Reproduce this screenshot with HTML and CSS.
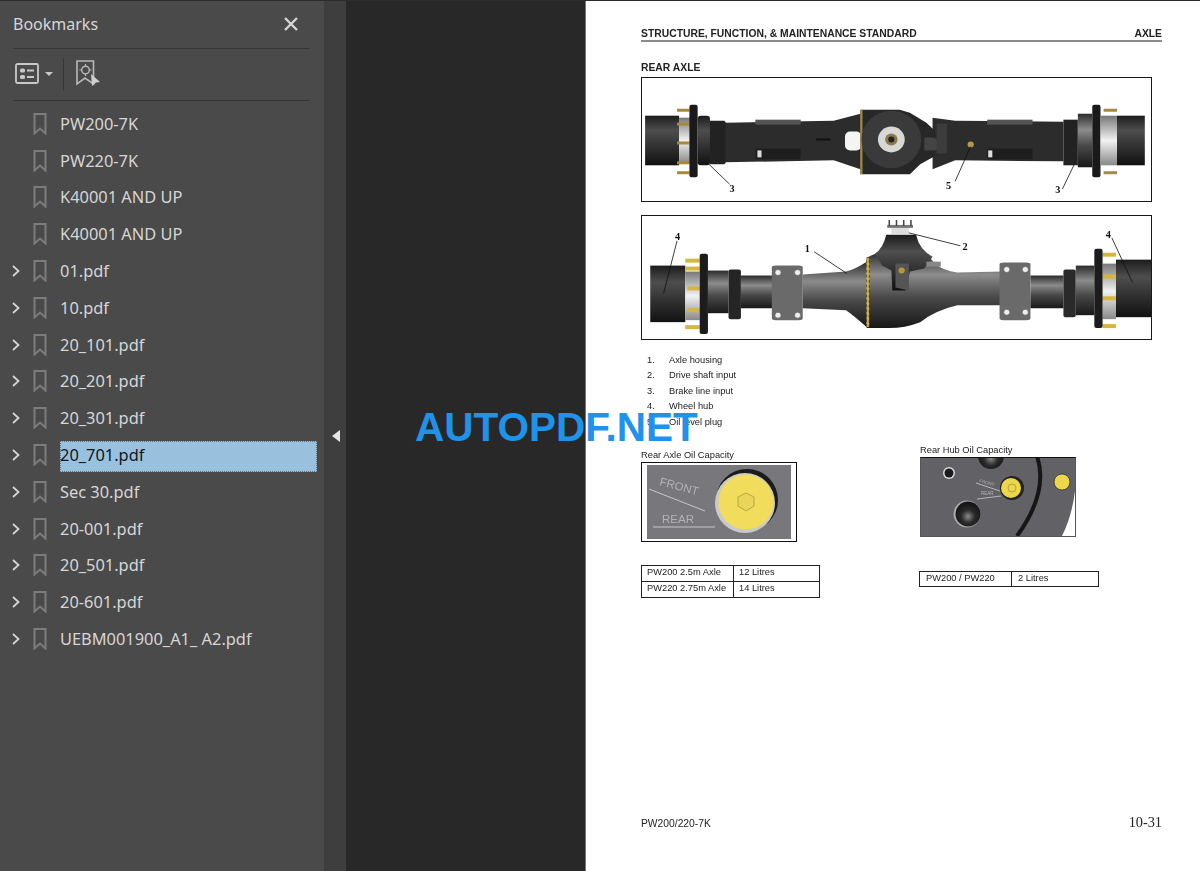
FILE: index.html
```html
<!DOCTYPE html>
<html lang="en">
<head>
    <meta charset="UTF-8">
    <meta name="viewport" content="width=device-width, initial-scale=1.0">
    <title>PW200/220-7K - Bookmarks</title>
    <link rel="stylesheet" href="styles.css">
</head>
<body>
    <svg class="defs" width="0" height="0">
        <defs>
            <symbol id="bm" viewBox="0 0 14 22">
                <path d="M1.5 1h11v19.5L7 15.5l-5.500 5z" fill="none" stroke="currentColor" stroke-width="2"/>
            </symbol>
            <symbol id="chev" viewBox="0 0 8 12">
                <path d="M1 1l5.500 5L1 11" fill="none" stroke="currentColor" stroke-width="1.800"/>
            </symbol>
            <linearGradient id="metal" x1="0" y1="0" x2="0" y2="1">
                <stop offset="0" stop-color="#1c1c1c"/>
                <stop offset=".3" stop-color="#4e4e4e"/>
                <stop offset=".6" stop-color="#333"/>
                <stop offset="1" stop-color="#111"/>
            </linearGradient>
            <linearGradient id="steel" x1="0" y1="0" x2="0" y2="1">
                <stop offset="0" stop-color="#2b2b2b"/>
                <stop offset=".3" stop-color="#8c8c8c"/>
                <stop offset=".6" stop-color="#484848"/>
                <stop offset="1" stop-color="#181818"/>
            </linearGradient>
            <linearGradient id="silver" x1="0" y1="0" x2="0" y2="1">
                <stop offset="0" stop-color="#777"/>
                <stop offset=".5" stop-color="#f2f2f2"/>
                <stop offset="1" stop-color="#888"/>
            </linearGradient>
            <radialGradient id="ball" cx=".5" cy=".6" r=".6">
                <stop offset="0" stop-color="#8a8a8a"/>
                <stop offset=".45" stop-color="#2a2a2a"/>
                <stop offset="1" stop-color="#111"/>
            </radialGradient>
        </defs>
    </svg>

    <div class="viewer">
        <aside class="sidebar">
            <header class="side-head">
                <h1>Bookmarks</h1>
                <svg class="close" width="16" height="16" viewBox="0 0 16 16">
                    <path d="M2 2l12 12M14 2L2 14" stroke="#d4d4d4" stroke-width="2.400" fill="none"/>
                </svg>
            </header>
            <div class="side-tools">
                <svg class="tool-list" width="24" height="21" viewBox="0 0 24 21">
                    <rect x="1" y="1" width="22" height="19" rx="1.500" fill="none" stroke="#c8c8c8" stroke-width="1.800"/>
                    <rect x="5" y="5.500" width="5" height="4" rx="1.500" fill="#c8c8c8"/>
                    <rect x="5" y="12" width="5" height="4" rx="1.500" fill="#c8c8c8"/>
                    <path d="M12 7.500h7M12 14h7" stroke="#c8c8c8" stroke-width="1.800"/>
                </svg>
                <span class="caret"></span>
                <span class="tool-sep"></span>
                <svg width="25" height="27" viewBox="0 0 25 27">
                    <path d="M1 1h16.500v23L9 18l-8 6z" fill="none" stroke="#b8b8b8" stroke-width="1.600"/>
                    <circle cx="9.500" cy="10" r="3.800" fill="none" stroke="#b8b8b8" stroke-width="1.400"/>
                    <path d="M9.500 4v2M9.500 14v2M3.500 10h2M13.500 10h2" stroke="#b8b8b8" stroke-width="1.200"/>
                    <path d="M15 14l9 8-4 .5-4 3.500z" fill="#d0d0d0"/>
                </svg>
            </div>
            <ul class="tree">
                <li><span class="twist"></span><svg class="mark"><use href="#bm"/></svg><span class="label">PW200-7K</span></li>
                <li><span class="twist"></span><svg class="mark"><use href="#bm"/></svg><span class="label">PW220-7K</span></li>
                <li><span class="twist"></span><svg class="mark"><use href="#bm"/></svg><span class="label">K40001 AND UP</span></li>
                <li><span class="twist"></span><svg class="mark"><use href="#bm"/></svg><span class="label">K40001 AND UP</span></li>
                <li><svg class="twist"><use href="#chev"/></svg><svg class="mark"><use href="#bm"/></svg><span class="label">01.pdf</span></li>
                <li><svg class="twist"><use href="#chev"/></svg><svg class="mark"><use href="#bm"/></svg><span class="label">10.pdf</span></li>
                <li><svg class="twist"><use href="#chev"/></svg><svg class="mark"><use href="#bm"/></svg><span class="label">20_101.pdf</span></li>
                <li><svg class="twist"><use href="#chev"/></svg><svg class="mark"><use href="#bm"/></svg><span class="label">20_201.pdf</span></li>
                <li><svg class="twist"><use href="#chev"/></svg><svg class="mark"><use href="#bm"/></svg><span class="label">20_301.pdf</span></li>
                <li class="selected"><svg class="twist"><use href="#chev"/></svg><svg class="mark"><use href="#bm"/></svg><span class="label">20_701.pdf</span></li>
                <li><svg class="twist"><use href="#chev"/></svg><svg class="mark"><use href="#bm"/></svg><span class="label">Sec 30.pdf</span></li>
                <li><svg class="twist"><use href="#chev"/></svg><svg class="mark"><use href="#bm"/></svg><span class="label">20-001.pdf</span></li>
                <li><svg class="twist"><use href="#chev"/></svg><svg class="mark"><use href="#bm"/></svg><span class="label">20_501.pdf</span></li>
                <li><svg class="twist"><use href="#chev"/></svg><svg class="mark"><use href="#bm"/></svg><span class="label">20-601.pdf</span></li>
                <li><svg class="twist"><use href="#chev"/></svg><svg class="mark"><use href="#bm"/></svg><span class="label">UEBM001900_A1_ A2.pdf</span></li>
            </ul>
        </aside>

        <div class="collapse-strip"><span class="collapse-arrow"></span></div>

        <main class="canvas">
            <article class="page">
                <div class="page-head">
                    <span>STRUCTURE, FUNCTION, &amp; MAINTENANCE STANDARD</span>
                    <span>AXLE</span>
                </div>
                <h2>REAR AXLE</h2>

                <figure class="axle-fig fig-top">
                    <svg viewBox="0 0 494 124" preserveAspectRatio="none">
                        <rect x="3" y="38" width="33" height="50" fill="url(#metal)"/>
                        <rect x="36" y="40" width="11" height="46" fill="url(#silver)"/>
                        <g fill="#a58a3a">
                            <rect x="34" y="31" width="12" height="3"/>
                            <rect x="34" y="45" width="12" height="3"/>
                            <rect x="34" y="64" width="12" height="3"/>
                            <rect x="34" y="84" width="12" height="3"/>
                            <rect x="34" y="94" width="12" height="3"/>
                            <rect x="448" y="31" width="13" height="3"/>
                            <rect x="448" y="45" width="13" height="3"/>
                            <rect x="448" y="64" width="13" height="3"/>
                            <rect x="448" y="84" width="13" height="3"/>
                            <rect x="448" y="94" width="13" height="3"/>
                        </g>
                        <rect x="46" y="27" width="8" height="73" rx="2" fill="#1a1a1a"/>
                        <rect x="54" y="38" width="12" height="50" rx="3" fill="url(#metal)"/>
                        <path d="M66 43h14q5 6 5 12v18q0 8-5 14H66z" fill="#222"/>
                        <path d="M81 45l105-2 26-7v56l-26-9-105 2z" fill="#2c2c2c"/>
                        <path d="M282 40l22 3 105 1v40l-105-1-22 9z" fill="#2c2c2c"/>
                        <rect x="110" y="42" width="44" height="5" fill="#555"/>
                        <rect x="110" y="71" width="44" height="11" rx="1" fill="#1e1e1e"/>
                        <rect x="112" y="73" width="4" height="7" fill="#ddd"/>
                        <rect x="335" y="42" width="44" height="5" fill="#555"/>
                        <rect x="335" y="71" width="44" height="11" rx="1" fill="#1e1e1e"/>
                        <rect x="336" y="73" width="4" height="7" fill="#ddd"/>
                        <rect x="197" y="54" width="16" height="19" rx="5" fill="#f4f4f4"/>
                        <rect x="169" y="61" width="14" height="2" fill="#111"/>
                        <path d="M212 32h38l10 3 16 10 8 8v26l-14 8-10 10h-48z" fill="#272727"/>
                        <rect x="212" y="32" width="2" height="65" fill="#a58a3a"/>
                        <circle cx="242" cy="62" r="29" fill="#3a3a3a"/>
                        <circle cx="242" cy="62" r="13" fill="#d8d8d4"/>
                        <circle cx="242" cy="62" r="6" fill="#8a7a4c"/>
                        <circle cx="242" cy="62" r="3" fill="#222"/>
                        <path d="M274 60h8q8 3 8 8t-8 5h-8z" fill="#444"/>
                        <rect x="286" y="46" width="10" height="30" fill="#3c3c3c"/>
                        <circle cx="319" cy="67" r="3" fill="#b89a48"/>
                        <rect x="409" y="42" width="14" height="46" fill="#222"/>
                        <rect x="423" y="36" width="14" height="54" fill="url(#steel)"/>
                        <rect x="437" y="27" width="8" height="73" rx="2" fill="#1a1a1a"/>
                        <rect x="445" y="38" width="16" height="50" fill="url(#silver)"/>
                        <rect x="461" y="38" width="27" height="50" fill="url(#metal)"/>
                        <g fill="none" stroke="#111" stroke-width=".8">
                            <path d="M85 107L64 86"/>
                            <path d="M304 104l15-35"/>
                            <path d="M408 112l12-26"/>
                        </g>
                        <text x="85" y="115">3</text>
                        <text x="295" y="112">5</text>
                        <text x="401" y="116">3</text>
                    </svg>
                </figure>

                <figure class="axle-fig fig-side">
                    <svg viewBox="0 0 494 124" preserveAspectRatio="none">
                        <rect x="8" y="50" width="34" height="57" fill="url(#metal)"/>
                        <rect x="42" y="56" width="14" height="49" fill="url(#silver)"/>
                        <g fill="#d6b63c">
                            <rect x="42" y="43" width="14" height="4"/>
                            <rect x="42" y="51" width="14" height="4"/>
                            <rect x="44" y="71" width="12" height="4"/>
                            <rect x="44" y="93" width="12" height="4"/>
                            <rect x="42" y="110" width="14" height="4"/>
                        </g>
                        <rect x="56" y="38" width="8" height="81" rx="2" fill="#1c1c1c"/>
                        <rect x="64" y="55" width="20" height="43" fill="url(#steel)"/>
                        <rect x="84" y="54" width="12" height="50" rx="2" fill="#252525"/>
                        <rect x="96" y="60" width="34" height="33" fill="url(#steel)"/>
                        <path d="M156 59l42-3q10-3 20-10v66q-13-12-20-17l-42-2z" fill="url(#steel)"/>
                        <path d="M126 52q0-2 4-2h22q4 0 4 2v51q0 2-4 2h-22q-4 0-4-2z" fill="#6a6a6a"/>
                        <path d="M218 42q10-6 22-6h26q12 2 18 12 8 7 22 9l44-1v34h-44q-21 5-36 17-15 6-30 6h-22z" fill="url(#steel)"/>
                        <rect x="218" y="42" width="2.500" height="70" fill="#d6b63c" stroke="#111" stroke-width=".5" stroke-dasharray="3 2"/>
                        <path d="M226 38q8-5 11-19h29q3 15 16 22l-8 12-14 3-4 19h-13l-1-20-9-5z" fill="url(#metal)"/>
                        <rect x="242" y="12" width="17" height="6" fill="#ddd"/>
                        <rect x="238" y="9" width="25" height="3" fill="#777"/>
                        <path d="M240 4v6M247 4v6M254 4v6M261 4v6" stroke="#444" stroke-width="1.500"/>
                        <path d="M246 48h13v27l-13-3z" fill="#555"/>
                        <circle cx="252" cy="55" r="3" fill="#b8982e"/>
                        <rect x="276" y="46" width="14" height="5" fill="#888"/>
                        <path d="M347 49q0-2 4-2h22q4 0 4 2v54q0 2-4 2h-22q-4 0-4-2z" fill="#6a6a6a"/>
                        <rect x="377" y="60" width="32" height="33" fill="url(#steel)"/>
                        <rect x="409" y="54" width="12" height="48" rx="2" fill="#2a2a2a"/>
                        <rect x="421" y="50" width="18" height="50" fill="url(#steel)"/>
                        <rect x="447" y="48" width="13" height="56" fill="url(#silver)"/>
                        <rect x="460" y="44" width="34" height="58" fill="url(#metal)"/>
                        <g fill="#d6b63c">
                            <rect x="447" y="37" width="13" height="4"/>
                            <rect x="447" y="59" width="13" height="4"/>
                            <rect x="447" y="81" width="13" height="4"/>
                            <rect x="447" y="109" width="13" height="4"/>
                        </g>
                        <rect x="439" y="33" width="8" height="80" rx="2" fill="#1c1c1c"/>
                        <g fill="#eee" stroke="#555" stroke-width=".6">
                            <circle cx="132" cy="57" r="3"/>
                            <circle cx="151" cy="57" r="3"/>
                            <circle cx="132" cy="100" r="3"/>
                            <circle cx="151" cy="100" r="3"/>
                            <circle cx="354" cy="54" r="3"/>
                            <circle cx="372" cy="54" r="3"/>
                            <circle cx="354" cy="97" r="3"/>
                            <circle cx="372" cy="97" r="3"/>
                        </g>
                        <g fill="none" stroke="#111" stroke-width=".8">
                            <path d="M34 25L21 78"/>
                            <path d="M167 36l32 22"/>
                            <path d="M309 30l-50-13"/>
                            <path d="M456 22l20 45"/>
                        </g>
                        <text x="32" y="24">4</text>
                        <text x="158" y="36">1</text>
                        <text x="311" y="34">2</text>
                        <text x="450" y="22">4</text>
                    </svg>
                </figure>

                <ol class="parts">
                    <li><span>1.</span>Axle housing</li>
                    <li><span>2.</span>Drive shaft input</li>
                    <li><span>3.</span>Brake line input</li>
                    <li><span>4.</span>Wheel hub</li>
                    <li><span>5.</span>Oil level plug</li>
                </ol>

                <div class="capacity">
                    <section class="cap-col cap-axle">
                        <p>Rear Axle Oil Capacity</p>
                        <div class="photo">
                            <svg width="154" height="78" viewBox="0 0 154 78">
                                <rect x="5" y="2" width="144" height="74" fill="#77777c"/>
                                <circle cx="105" cy="37" r="31" fill="#1b1b1b"/>
                                <circle cx="103" cy="40" r="30" fill="#c9c9c9"/>
                                <circle cx="104" cy="39" r="27.500" fill="#f1dc5c"/>
                                <path d="M104 30l8 4v9l-8 5-8-5v-9z" fill="#ead558" stroke="#a89a48" stroke-width=".8"/>
                                <path d="M7 26l56 22M11 64h62" stroke="#c8c8c8" stroke-width="1"/>
                                <text class="stamp" transform="translate(17 22) rotate(15)">FRONT</text>
                                <text class="stamp" x="20" y="60">REAR</text>
                            </svg>
                        </div>
                        <table class="cap-table">
                            <tr><td>PW200 2.5m Axle</td><td>12 Litres</td></tr>
                            <tr><td>PW220 2.75m Axle</td><td>14 Litres</td></tr>
                        </table>
                    </section>
                    <section class="cap-col cap-hub">
                        <p>Rear Hub Oil Capacity</p>
                        <div class="photo">
                            <svg width="154" height="78" viewBox="0 0 154 78">
                                <rect width="154" height="78" fill="#626266"/>
                                <path d="M154 33q-3 25-13 45h13z" fill="#fff"/>
                                <path d="M116 -2q12 36-20 80" fill="none" stroke="#161616" stroke-width="4"/>
                                <circle cx="70" cy="-2" r="13" fill="url(#ball)"/>
                                <circle cx="28" cy="15" r="6" fill="#ddd"/>
                                <circle cx="28" cy="15" r="4.500" fill="#1a1a1a"/>
                                <circle cx="46" cy="56" r="13.500" fill="#aaa"/>
                                <circle cx="47" cy="56" r="12.500" fill="url(#ball)"/>
                                <circle cx="91" cy="30" r="12" fill="#222"/>
                                <circle cx="90" cy="30" r="10" fill="#ecd64a"/>
                                <circle cx="91" cy="30" r="4" fill="none" stroke="#a39545" stroke-width=".8"/>
                                <circle cx="141" cy="24" r="8" fill="#ecd64a" stroke="#333" stroke-width=".8"/>
                                <path d="M55 25l24 8M56 41l24-3" stroke="#ccc" stroke-width=".8"/>
                                <text class="stamp stamp-sm" transform="translate(58 24) rotate(16)">FRONT</text>
                                <text class="stamp stamp-sm" x="60" y="37">REAR</text>
                            </svg>
                        </div>
                        <table class="cap-table">
                            <tr><td>PW200 / PW220</td><td>2 Litres</td></tr>
                        </table>
                    </section>
                </div>

                <footer class="page-foot">
                    <span>PW200/220-7K</span>
                    <span class="page-no">10-31</span>
                </footer>
            </article>
        </main>
    </div>

    <div class="watermark">AUTOPDF.NET</div>
</body>
</html>
```

FILE: styles.css
```css
:root {
    --panel: #4a4a4a;
    --panel-line: #363636;
    --strip: #3e3e3e;
    --canvas: #282828;
    --side-text: #d6d6d6;
    --selected: #99c0dc;
    --page-text: #222;
}

* {
    margin: 0;
    padding: 0;
    box-sizing: border-box;
}

html, body {
    height: 100%;
    overflow: hidden;
}

body {
    font-family: "Noto Sans", "Open Sans", sans-serif;
    background: var(--canvas);
}

.defs {
    position: absolute;
}

.viewer {
    display: flex;
    height: 871px;
    border-top: 1px solid #2c2c2c;
}

/* bookmarks panel */
.sidebar {
    width: 324px;
    padding: 0 15px 0 13px;
    background: var(--panel);
    color: var(--side-text);
}

.side-head {
    display: flex;
    align-items: center;
    justify-content: space-between;
    height: 48px;
    padding: 0 10px 2px 0;
    border-bottom: 1px solid var(--panel-line);
}

.side-head h1 {
    font-size: 16px;
    font-weight: 400;
}

.side-tools {
    display: flex;
    align-items: center;
    height: 52px;
    padding: 0 0 2px 2px;
    border-bottom: 1px solid var(--panel-line);
}

.caret {
    width: 0;
    height: 0;
    margin: 0 10px 0 6px;
    border-left: 4px solid transparent;
    border-right: 4px solid transparent;
    border-top: 4px solid #c8c8c8;
}

.tool-sep {
    width: 1px;
    height: 32px;
    margin-right: 12px;
    background: var(--panel-line);
}

.tree {
    list-style: none;
    margin: 4.5px 0 0 -13px;
}

.tree li {
    display: flex;
    align-items: center;
    height: 36.8px;
    font-size: 16.4px;
}

.twist {
    flex: none;
    width: 8px;
    height: 12px;
    margin-left: 12px;
    color: #d4d4d4;
}

.mark {
    flex: none;
    width: 14px;
    height: 22px;
    margin: 0 13px;
    color: #7c7c7c;
}

.label {
    flex: 1;
    line-height: 30px;
    white-space: nowrap;
}

.tree .selected .label {
    margin: 3px -8px 0 0;
    padding-bottom: 3px;
    line-height: 28px;
    background: var(--selected);
    outline: 1px dotted #5e7686;
    outline-offset: -1px;
    color: #10161c;
}

.collapse-strip {
    display: flex;
    align-items: center;
    width: 22px;
    padding-left: 8px;
    background: var(--strip);
}

.collapse-arrow {
    width: 0;
    height: 0;
    border-top: 6.500px solid transparent;
    border-bottom: 6.500px solid transparent;
    border-right: 8px solid #e6e6e6;
}

/* document */
.canvas {
    flex: 1;
    display: flex;
    justify-content: flex-end;
}

.page {
    display: flex;
    flex-direction: column;
    width: 615px;
    padding: 27px 38px 40px 55px;
    background: #fff;
    border-left: 1px solid #777;
    font-family: "Liberation Sans", Arial, sans-serif;
    color: var(--page-text);
}

.page > * {
    filter: blur(.3px);
}

.page-head {
    display: flex;
    justify-content: space-between;
    border-bottom: 2px solid #8a8a8a;
    font-size: 10.35px;
    font-weight: 700;
    line-height: 12px;
}

.page h2 {
    margin-top: 19px;
    font-size: 10.35px;
    font-weight: 700;
    line-height: 13px;
}

.axle-fig {
    width: 511px;
    height: 125px;
    margin-top: 3px;
    border: 1px solid #1a1a1a;
}

.fig-side {
    margin-top: 13px;
}

.axle-fig svg {
    display: block;
    width: 100%;
    height: 100%;
}

.axle-fig text {
    font-family: "Liberation Serif", serif;
    font-size: 10px;
    font-weight: 700;
    fill: #111;
}

.parts {
    list-style: none;
    margin: 12.5px 0 0 6px;
    font-size: 9.3px;
    line-height: 15.500px;
}

.parts span {
    display: inline-block;
    width: 22px;
}

.capacity {
    display: flex;
    align-items: flex-start;
    margin-top: 20px;
}

.cap-col p {
    font-size: 9.3px;
    line-height: 11px;
}

.cap-axle {
    width: 279px;
}

.cap-hub {
    margin-top: -5px;
}

.photo {
    width: 156px;
    height: 80px;
    margin-top: 1px;
    border: 1px solid #111;
}

.photo svg {
    display: block;
}

.cap-hub .photo {
    border-color: #555;
    border-top-color: #111;
}

.stamp {
    font-family: "Liberation Sans", Arial, sans-serif;
    font-size: 11.5px;
    fill: #b4b4b4;
}

.stamp-sm {
    font-size: 4.500px;
}

.cap-table {
    width: 179px;
    margin-top: 22.5px;
    border-collapse: collapse;
    font-size: 9.3px;
    line-height: 10px;
}

.cap-hub .cap-table {
    margin-top: 33.5px;
    margin-left: -1px;
    width: 180px;
}

.cap-hub .cap-table td {
    height: 15px;
    padding-left: 6px;
}

.cap-table td {
    height: 16px;
    padding: 0 5px 2px;
    border: 1px solid #222;
}

.cap-table td:first-child {
    width: 92px;
}

.page-foot {
    display: flex;
    align-items: baseline;
    justify-content: space-between;
    margin-top: auto;
    font-size: 10.3px;
}

.page-no {
    font-family: "Liberation Serif", serif;
    font-size: 14.3px;
}

.watermark {
    position: absolute;
    left: 415px;
    top: 403px;
    font-family: "Liberation Sans", Arial, sans-serif;
    font-size: 40.5px;
    font-weight: 700;
    line-height: 48px;
    color: #1f92ea;
}
```
